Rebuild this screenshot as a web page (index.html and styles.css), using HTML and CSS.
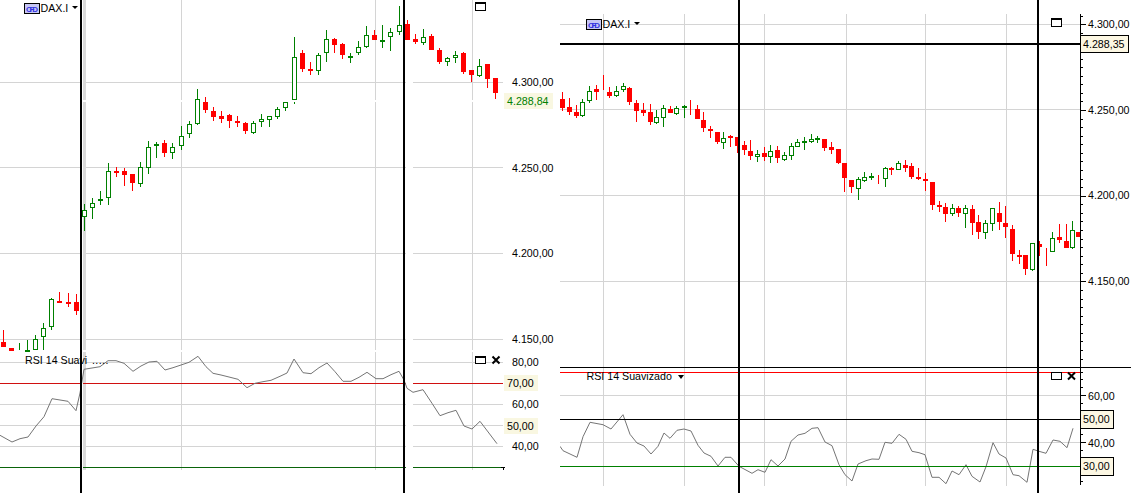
FILE: index.html
```html
<!DOCTYPE html>
<html>
<head>
    <title>DAX.I</title>
    <link rel="stylesheet" href="styles.css">
</head>
<body>
<div class="screen">

    <!-- left chart, coordinates are page pixels -->
    <svg class="chart chart-left" viewBox="0 0 560 494" width="560" height="494">
        <path class="grid" d="M0 82.5H503M0 167.5H503M0 253.5H503M0 339.5H503M0 362.5H503M0 404.5H503M0 425.5H503M0 446.5H503"/>
        <path class="grid" d="M181.5 0V470M375.5 0V470M472.5 0V470"/>
        <rect class="strip-grey" x="83" y="0" width="3" height="470"/>
        <path class="line-red-dark" d="M0 383.5H503"/>
        <path class="line-green-dark" d="M0 467.5H503"/>
        <rect class="strip-white" x="0" y="100" width="503" height="2"/>
        <rect class="strip-white" x="0" y="350" width="503" height="2"/>
        <rect class="strip-white" x="82" y="0" width="1" height="470"/>
        <rect class="strip-white" x="406" y="0" width="7" height="470"/>
        <g id="candles-left"></g>
        <polyline id="rsi-left" class="rsi" points=""/>
        <rect class="cursor" x="80" y="0" width="2" height="493"/>
        <rect class="cursor" x="403" y="0" width="2" height="493"/>

        <rect class="badge" x="24.5" y="3.5" width="15" height="10"/>
        <text class="badge-text" x="26" y="11.5" textLength="12">CFD</text>
        <text class="label" x="40.5" y="12">DAX.I</text>
        <path class="arrow" d="M72 6H78L75 9Z"/>
        <text class="label" x="25" y="364">RSI 14 Suavi</text>
        <text class="label dots" x="92" y="364">.....</text>

        <rect class="icon-box" x="475.5" y="2.5" width="10" height="8"/>
        <rect class="icon-bar" x="475" y="2" width="11" height="2"/>
        <rect class="icon-box" x="475.5" y="356.5" width="10" height="7"/>
        <rect class="icon-bar" x="475" y="356" width="11" height="2"/>
        <path class="icon-x" d="M492.5 356.5L499.5 363.5M499.5 356.5L492.5 363.5"/>
        <path class="cursor-tick" d="M501 467.5H505M503.5 467V470"/>

        <rect class="tag" x="504" y="93" width="49" height="16"/>
        <rect class="tag" x="504" y="375" width="34" height="16"/>
        <rect class="tag" x="504" y="418" width="34" height="16"/>
        <text class="label" x="512" y="86">4.300,00</text>
        <text class="label last-price" x="507" y="105">4.288,84</text>
        <text class="label" x="512" y="172">4.250,00</text>
        <text class="label" x="512" y="257">4.200,00</text>
        <text class="label" x="512" y="343">4.150,00</text>
        <text class="label" x="512" y="366">80,00</text>
        <text class="label" x="507" y="387">70,00</text>
        <text class="label" x="512" y="408">60,00</text>
        <text class="label" x="507" y="430">50,00</text>
        <text class="label" x="512" y="450">40,00</text>
    </svg>

    <!-- right chart -->
    <svg class="chart chart-right" viewBox="560 0 571 494" width="571" height="494">
        <path class="grid" d="M560 24.5H1080M560 109.5H1080M560 195.5H1080M560 281.5H1080M560 395.5H1080M560 442.5H1080"/>
        <path class="grid" d="M603.5 14V486M684.5 14V486M764.5 14V486M846.5 14V486M925.5 14V486M1006.5 14V486"/>
        <g id="candles-right"></g>
        <polyline id="rsi-right" class="rsi" points=""/>
        <path class="line-red" d="M560 372.5H1081"/>
        <path class="line-green" d="M560 466.5H1080"/>
        <path class="line-black" d="M560 367.5H1131M560 419.5H1080"/>
        <rect class="cursor" x="560" y="43" width="520" height="2"/>
        <rect class="cursor" x="738" y="0" width="2" height="493"/>
        <rect class="cursor" x="1037" y="0" width="2" height="493"/>

        <rect class="badge" x="586.5" y="19.5" width="15" height="10"/>
        <text class="badge-text" x="588" y="27.5" textLength="12">CFD</text>
        <text class="label" x="602.5" y="28">DAX.I</text>
        <path class="arrow" d="M634 22H640L637 25Z"/>
        <text class="label" x="586.5" y="380">RSI 14 Suavizado</text>
        <path class="arrow" d="M678 375H684L681 379Z"/>

        <rect class="icon-box" x="1051.5" y="18.5" width="10" height="8"/>
        <rect class="icon-bar" x="1051" y="18" width="11" height="2"/>
        <rect class="icon-box" x="1051.5" y="372.5" width="10" height="7"/>
        <path class="icon-x" d="M1068 372.5L1075 379.5M1075 372.5L1068 379.5"/>

        <path id="axis-right" class="line-black" d="M1080.5 14V485"/>
        <rect class="tag-box" x="1080.5" y="35.5" width="48" height="17"/>
        <rect class="tag-box" x="1080.5" y="410.5" width="33" height="18"/>
        <rect class="tag-box" x="1080.5" y="457.5" width="33" height="18"/>
        <text class="label" x="1088" y="28">4.300,00</text>
        <text class="label" x="1083" y="48">4.288,35</text>
        <text class="label" x="1088" y="114">4.250,00</text>
        <text class="label" x="1088" y="199">4.200,00</text>
        <text class="label" x="1088" y="285">4.150,00</text>
        <text class="label" x="1088" y="400">60,00</text>
        <text class="label" x="1083" y="423">50,00</text>
        <text class="label" x="1088" y="447">40,00</text>
        <text class="label" x="1083" y="470">30,00</text>
    </svg>

</div>
<script src="chart.js"></script>
</body>
</html>
```
FILE: styles.css
```css
html, body {
margin: 0;
padding: 0;
background-color: #FFF;
overflow: hidden;
}
.screen {
display: flex;
width: 1131px;
height: 494px;
}
.chart {
display: block;
flex: none;
}
.grid {
stroke: #D4D4D4;
stroke-width: 1;
fill: none;
shape-rendering: crispEdges;
}
.strip-grey {
fill: #DADADA;
}
.strip-white {
fill: #FFF;
}
.line-red {
stroke: #F00;
fill: none;
shape-rendering: crispEdges;
}
.line-green {
stroke: #008000;
fill: none;
shape-rendering: crispEdges;
}
.line-red-dark {
stroke: #D01010;
fill: none;
shape-rendering: crispEdges;
}
.line-green-dark {
stroke: #0A640A;
fill: none;
shape-rendering: crispEdges;
}
.line-black {
stroke: #000;
fill: none;
shape-rendering: crispEdges;
}
.cursor {
fill: #000;
}
.cursor-tick {
stroke: #000;
fill: none;
shape-rendering: crispEdges;
}
.rsi {
stroke: #757575;
stroke-width: 1;
fill: none;
}
.wick-up {
stroke: #008000;
shape-rendering: crispEdges;
}
.wick-down {
stroke: #F00;
shape-rendering: crispEdges;
}
.body-up {
fill: #FFF;
stroke: #008000;
shape-rendering: crispEdges;
}
.body-down {
fill: #F00;
shape-rendering: crispEdges;
}
.dash-up {
fill: #008000;
shape-rendering: crispEdges;
}
.label {
font-family: "Liberation Sans", Arial, sans-serif;
font-size: 10.67px;
fill: #000;
}
.last-price {
fill: #008000;
}
.dots {
letter-spacing: 0.4px;
}
.badge {
fill: #C6C6F4;
stroke: #000;
shape-rendering: crispEdges;
}
.badge-text {
font-family: "Liberation Sans", Arial, sans-serif;
font-size: 8px;
font-weight: bold;
fill: #3434E0;
}
.arrow {
fill: #000;
}
.icon-box {
fill: #FFF;
stroke: #000;
shape-rendering: crispEdges;
}
.icon-bar {
fill: #000;
}
.icon-x {
stroke: #000;
stroke-width: 2;
fill: none;
}
.tag {
fill: #F9F7E1;
}
.tag-box {
fill: #FCF7E3;
stroke: #000;
shape-rendering: crispEdges;
}
```
FILE: chart.js
```js
// [x, high, bodyTop, bodyBottom, low, up?]  up: 1 hollow green, 0 solid red
// bodyTop 0 means the candle is only a wick
var leftCandles = [
    [3,330,342,347,347,0],[11,348,348,351,351,0],[19,343,0,0,350,1],[27,340,350,351,351,1],
    [35,335,339,350,350,1],[43,323,328,337,350,1],[51,298,299,327,330,1],[59,292,301,302,303,0],
    [68,293,302,304,307,0],[76,294,302,311,315,0],[84,204,210,217,231,1],[92,198,203,208,219,1],
    [100,191,199,201,205,1],[108,163,171,198,205,1],[116,167,171,172,177,0],[124,168,171,175,186,0],
    [132,174,174,183,191,0],[140,162,167,184,187,1],[148,141,147,168,174,1],[156,142,144,146,158,1],
    [164,140,143,153,157,0],[172,143,147,153,159,1],[181,126,136,146,150,1],[189,121,124,134,138,1],
    [197,89,99,124,125,1],[205,97,102,110,113,0],[213,107,111,117,121,0],[221,111,116,119,123,0],
    [229,114,115,121,128,0],[237,116,121,123,127,0],[245,122,123,131,134,0],[253,121,123,133,134,1],
    [261,114,119,122,127,1],[269,116,116,120,127,1],[277,107,109,117,119,1],[285,102,102,108,111,1],
    [294,37,57,100,100,1],[294,102,0,0,104,1],[302,50,53,69,72,0],[310,62,69,71,75,0],
    [318,53,55,71,75,1],[326,30,39,53,62,1],[334,38,39,45,53,0],[342,43,44,55,59,0],
    [350,53,56,57,63,1],[358,41,47,53,55,1],[366,26,35,47,48,1],[374,30,35,40,40,0],
    [382,25,40,41,48,1],[390,28,32,37,51,1],[399,6,25,32,35,1],[407,20,24,40,40,0],
    [415,34,39,42,44,0],[423,29,37,43,45,1],[431,34,36,50,50,0],[439,48,50,62,64,0],
    [447,57,58,62,66,1],[455,51,55,58,63,1],[463,52,53,72,74,0],[471,70,70,75,82,0],
    [479,59,66,76,77,1],[487,64,64,79,88,0],[495,78,78,93,99,0]
];

var rightCandles = [
    [562,92,99,108,111,0],[569,98,107,112,115,0],[576,105,112,116,118,0],[582,99,102,116,117,1],
    [589,86,91,101,103,1],[596,85,89,92,100,0],[603,75,0,0,90,0],[609,87,92,96,98,0],
    [616,86,91,96,97,1],[623,83,86,90,92,1],[629,87,88,102,105,0],[636,100,103,111,122,0],
    [643,103,110,113,116,0],[650,104,112,122,125,0],[656,110,117,123,124,1],[663,105,108,118,127,1],
    [670,106,109,113,113,0],[676,106,108,114,115,1],[684,105,106,107,118,1],[690,100,0,0,115,0],
    [697,105,109,119,119,0],[703,112,120,128,132,0],[710,126,129,131,138,0],[717,132,132,142,144,0],
    [723,132,138,143,149,1],[730,135,136,137,147,0],[737,137,137,146,153,0],[744,141,145,150,155,0],
    [750,140,151,156,160,0],[757,150,154,157,162,1],[764,147,153,157,161,0],[770,145,151,157,163,1],
    [777,146,150,158,163,0],[784,152,155,160,161,1],[791,143,146,156,160,1],[797,139,142,147,147,1],
    [804,137,141,142,150,1],[811,134,139,142,143,1],[817,136,138,139,143,1],[824,139,139,148,151,0],
    [831,142,147,150,154,0],[838,149,149,163,164,0],[844,163,163,178,192,0],[851,180,180,187,193,0],
    [858,177,179,189,200,1],[864,172,177,181,182,1],[871,173,176,178,180,1],[878,175,0,0,184,0],
    [885,167,168,179,187,1],[891,167,168,169,175,0],[898,161,163,170,170,1],[905,160,165,168,172,0],
    [911,163,166,177,179,0],[918,168,177,178,180,0],[925,173,179,180,191,0],[932,182,182,205,210,0],
    [939,201,205,207,212,0],[945,203,207,214,222,0],[952,204,208,214,216,1],[958,206,208,213,217,0],
    [965,205,208,214,228,1],[972,205,209,223,235,0],[978,215,222,232,239,0],[985,220,223,233,239,1],
    [992,208,208,224,231,1],[999,202,213,222,230,0],[1005,206,223,227,238,0],[1012,225,229,254,261,0],
    [1019,250,255,256,264,0],[1025,255,255,269,275,0],[1032,243,243,270,271,1],[1039,241,244,247,256,0],
    [1046,248,0,0,266,0],[1052,232,238,252,252,1],[1059,224,237,240,243,0],[1066,224,241,248,248,0],
    [1072,221,230,248,249,1],[1078,232,232,237,237,0]
];

var leftRsi = [
    [0,435.3],[12,442],[20,438.7],[28,437],[36,426],[44,416.7],[52,398.7],[68,401.3],[76,410.7],[80,393],
    [84,369.3],[92,368],[100,366.7],[108,360.7],[116,360.7],[124,363.3],[133,371.3],[141,366],[149,362],
    [157,361.3],[165,370],[173,367.7],[181,365],[189,362.3],[198,356.3],[206,366.7],[213,373.3],[221,375],
    [229,377],[238,379.3],[247,387.7],[255,383.3],[263,381.7],[271,380.3],[280,376.3],[287,373],[294,359],
    [303,372.7],[311,373.7],[319,367.7],[327,363],[335,371.7],[343,381.3],[351,381.3],[359,377.3],[367,372.3],
    [376,378.7],[383,378.7],[391,374.7],[399,371.3],[404,380],[407,388.3],[413,392.3],[423,389.7],[432,403.3],
    [440,415.7],[448,412.7],[456,410.3],[464,426],[472,429],[480,421.3],[497,443.7]
];

var rightRsi = [
    [560,446.3],[563,450.7],[577,457.3],[583,436.7],[590,422.3],[603,424.7],[611,429],[623,414.7],[630,434.3],
    [637,443],[644,446],[651,454],[658,446.3],[664,433],[670,438.3],[677,430.3],[684,429],[691,431],[698,445.3],
    [704,453],[711,456.3],[718,466],[725,457.3],[731,457.3],[739,466.3],[752,473.3],[758,469.7],[765,472.3],
    [771,459.7],[778,466],[785,459],[791,441.3],[798,435],[805,433.3],[812,428.3],[818,427.7],[825,442],
    [832,445.7],[839,464.7],[845,474.7],[852,481],[858,464],[866,460.7],[872,459],[879,459.3],[885,442.3],
    [892,443.3],[899,434.3],[906,439.3],[912,451.3],[919,452.7],[925,454.7],[932,477.3],[939,477.3],[946,483.7],
    [952,471],[959,474.7],[966,464.7],[972,476.3],[980,482],[986,466.7],[993,442.7],[999,454],[1006,458],
    [1013,474.7],[1019,475.7],[1027,482.3],[1033,449.3],[1039,451.3],[1046,453.3],[1053,440],[1060,441.3],
    [1067,447.7],[1073,428.3]
];

var SVG_NS = "http://www.w3.org/2000/svg";

function addShape(parent, name, className, attrs) {
    var el = document.createElementNS(SVG_NS, name);
    el.setAttribute("class", className);
    for (var key in attrs) {
        el.setAttribute(key, attrs[key]);
    }
    parent.appendChild(el);
}

function drawCandles(id, candles) {
    var group = document.getElementById(id);
    candles.forEach(function (c) {
        var x = c[0], high = c[1], top = c[2], bottom = c[3], low = c[4], up = c[5];
        addShape(group, "line", up ? "wick-up" : "wick-down", {x1: x + 0.5, x2: x + 0.5, y1: high, y2: low});
        if (!top) {
            return;
        }
        if (bottom - top < 2) {
            // doji, a short dash across the wick
            addShape(group, "rect", up ? "dash-up" : "body-down", {x: x - 2, y: top, width: 5, height: 2});
        } else if (up) {
            addShape(group, "rect", "body-up", {x: x - 1.5, y: top + 0.5, width: 4, height: bottom - top - 1});
        } else {
            addShape(group, "rect", "body-down", {x: x - 2, y: top, width: 5, height: bottom - top});
        }
    });
}

function drawRsi(id, points) {
    document.getElementById(id).setAttribute("points", points.map(function (p) {
        return p[0] + "," + p[1];
    }).join(" "));
}

function drawAxisTicks() {
    var d = "M1080.5 14V485";
    var i, y;
    for (i = 0; i < 42; i++) {
        y = Math.round(15.7 + i * 8.57);
        d += "M1080 " + (y + 0.5) + "H" + (i % 10 === 1 ? 1086 : 1083);
    }
    for (i = -3; i < 12; i++) {
        y = Math.round(395 + i * 7.83);
        d += "M1080 " + (y + 0.5) + "H" + (i % 6 === 0 ? 1086 : 1083);
    }
    document.getElementById("axis-right").setAttribute("d", d);
}

drawCandles("candles-left", leftCandles);
drawCandles("candles-right", rightCandles);
drawRsi("rsi-left", leftRsi);
drawRsi("rsi-right", rightRsi);
drawAxisTicks();
```
